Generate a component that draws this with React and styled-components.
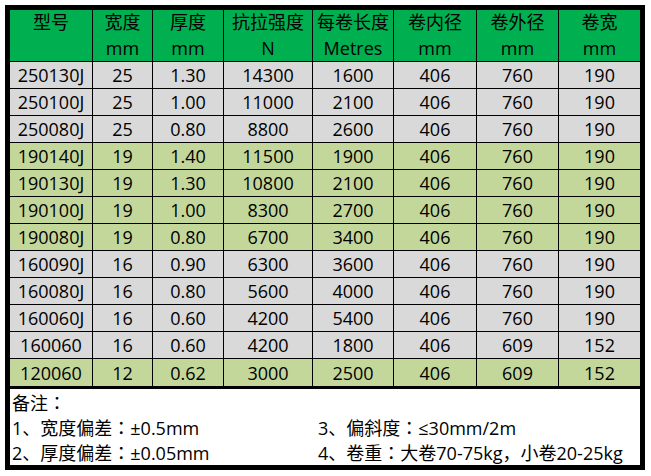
import React from 'react'
import styled, { createGlobalStyle } from 'styled-components'

const GlobalStyle = createGlobalStyle`
  body {
    margin: 0;
    background: #ffffff;
    font-family: "Open Sans", "Noto Sans CJK SC", sans-serif;
    color: #000000;
  }
`

const Frame = styled.div`
  margin: 5px 0 0 5px;
  width: 630px;
  border: 5px solid #000000;
  background: #ffffff;
`

const Grid = styled.div`
  display: grid;
  grid-template-columns: 83px 60px 71px 89px 81px 83px 82px 81px;
`

const HeadCell = styled.div`
  display: flex;
  flex-direction: column;
  justify-content: center;
  align-items: center;
  height: 52px;
  box-sizing: border-box;
  padding-bottom: 1px;
  background: #00b050;
  border-bottom: 1px solid #000000;
  border-right: ${p => (p.$lastCol ? 'none' : '1px solid #000000')};
  font-size: 18px;
  line-height: 26px;
  white-space: nowrap;
`

const Cell = styled.div`
  display: flex;
  justify-content: center;
  align-items: center;
  height: 27px;
  box-sizing: border-box;
  background: ${p => (p.$tone === 'green' ? '#c4d79b' : '#d9d9d9')};
  border-bottom: ${p => (p.$lastRow ? 'none' : '1px solid #000000')};
  border-right: ${p => (p.$lastCol ? 'none' : '1px solid #000000')};
  font-size: 18px;
  white-space: nowrap;
`

const Notes = styled.div`
  display: grid;
  grid-template-columns: 306px 1fr;
  grid-auto-rows: 25.3px;
  align-items: center;
  padding-left: 2px;
  border-top: 3px solid #000000;
  font-size: 18px;
  white-space: nowrap;
`

const NoteTitle = styled.div`
  grid-column: 1 / span 2;
`

const Note = styled.div``

// full-width colon drawn centred in its box, as in the reference
const Colon = styled.span`
  font-family: "Noto Sans CJK JP", sans-serif;
`

const headers = [
  ['型号', ''],
  ['宽度', 'mm'],
  ['厚度', 'mm'],
  ['抗拉强度', 'N'],
  ['每卷长度', 'Metres'],
  ['卷内径', 'mm'],
  ['卷外径', 'mm'],
  ['卷宽', 'mm'],
]

const rows = [
  ['250130J', '25', '1.30', '14300', '1600', '406', '760', '190', 'gray'],
  ['250100J', '25', '1.00', '11000', '2100', '406', '760', '190', 'gray'],
  ['250080J', '25', '0.80', '8800', '2600', '406', '760', '190', 'gray'],
  ['190140J', '19', '1.40', '11500', '1900', '406', '760', '190', 'green'],
  ['190130J', '19', '1.30', '10800', '2100', '406', '760', '190', 'green'],
  ['190100J', '19', '1.00', '8300', '2700', '406', '760', '190', 'green'],
  ['190080J', '19', '0.80', '6700', '3400', '406', '760', '190', 'green'],
  ['160090J', '16', '0.90', '6300', '3600', '406', '760', '190', 'gray'],
  ['160080J', '16', '0.80', '5600', '4000', '406', '760', '190', 'gray'],
  ['160060J', '16', '0.60', '4200', '5400', '406', '760', '190', 'gray'],
  ['160060', '16', '0.60', '4200', '1800', '406', '609', '152', 'gray'],
  ['120060', '12', '0.62', '3000', '2500', '406', '609', '152', 'green'],
]

const App = () => {
  return (
    <>
      <GlobalStyle />
      <Frame>
        <Grid>
          {headers.map((h, i) => (
            <HeadCell key={i} $lastCol={i === headers.length - 1}>
              <div>{h[0]}</div>
              <div>{h[1] || '\u00a0'}</div>
            </HeadCell>
          ))}
          {rows.map((r, ri) =>
            r.slice(0, 8).map((v, ci) => (
              <Cell
                key={ri + '-' + ci}
                $tone={r[8]}
                $lastCol={ci === 7}
                $lastRow={ri === rows.length - 1}
              >
                {v}
              </Cell>
            ))
          )}
        </Grid>
        <Notes>
          <NoteTitle>备注<Colon>：</Colon></NoteTitle>
          <Note>1、宽度偏差<Colon>：</Colon>±0.5mm</Note>
          <Note>3、偏斜度<Colon>：</Colon>≤30mm/2m</Note>
          <Note>2、厚度偏差<Colon>：</Colon>±0.05mm</Note>
          <Note>4、卷重<Colon>：</Colon>大卷70-75kg<Colon>，</Colon>小卷20-25kg</Note>
        </Notes>
      </Frame>
    </>
  )
}

export default App
